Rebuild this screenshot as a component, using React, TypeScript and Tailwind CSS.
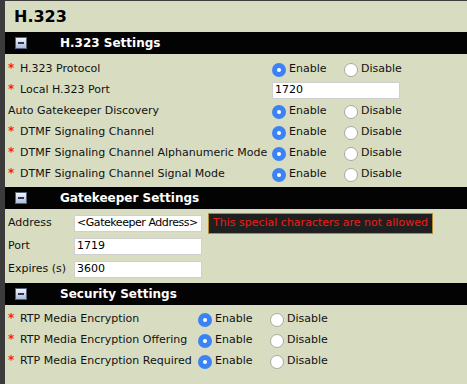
import React from "react";

const font = { fontFamily: '"DejaVu Sans", Verdana, sans-serif' };

function Radio({ checked }: { checked: boolean }) {
  return checked ? (
    <span className="w-[14px] h-[14px] rounded-full bg-[#3b82f6] flex items-center justify-center shrink-0">
      <span className="w-[4px] h-[4px] rounded-full bg-white" />
    </span>
  ) : (
    <span className="w-[14px] h-[14px] rounded-full bg-white border border-[#a8a8a8] shrink-0" />
  );
}

function EnableDisable() {
  return (
    <div className="flex items-center">
      <div className="flex items-center gap-[3px] w-[72px]">
        <Radio checked />
        <span>Enable</span>
      </div>
      <div className="flex items-center gap-[3px]">
        <Radio checked={false} />
        <span>Disable</span>
      </div>
    </div>
  );
}

function Label({ text, req }: { text: string; req?: boolean }) {
  return (
    <div className="flex items-center whitespace-nowrap">
      {req && (
        <span className="text-[#ff1a1a] font-bold w-[15px] pl-[3px] text-[12px] leading-none -mt-[3px]">*</span>
      )}
      <span className={req ? "" : "pl-[3px]"}>{text}</span>
    </div>
  );
}

function SectionHeader({ title }: { title: string }) {
  return (
    <div className="h-[22px] bg-[#030303] flex items-center">
      <span className="ml-[10px] w-[12px] h-[12px] border border-[#55627e] bg-gradient-to-b from-[#f4f6fb] to-[#aebbdb] flex items-center justify-center">
        <span className="w-[6px] h-[2px] bg-[#2d3550]" />
      </span>
      <span className="ml-[33px] text-white font-bold text-[12px]">{title}</span>
    </div>
  );
}

function TextBox({ value, tight }: { value: string; tight?: boolean }) {
  return (
    <div
      className={`w-[128px] h-[17px] bg-white border border-[#cfcfcf] flex items-center pl-[2px] text-[11px] text-black whitespace-nowrap overflow-hidden ${tight ? "tracking-[-0.45px]" : ""}`}
    >
      {value}
    </div>
  );
}

export default function App() {
  const h323Rows = [
    { label: "H.323 Protocol", req: true, kind: "radio" },
    { label: "Local H.323 Port", req: true, kind: "input" },
    { label: "Auto Gatekeeper Discovery", req: false, kind: "radio" },
    { label: "DTMF Signaling Channel", req: true, kind: "radio" },
    { label: "DTMF Signaling Channel Alphanumeric Mode", req: true, kind: "radio" },
    { label: "DTMF Signaling Channel Signal Mode", req: true, kind: "radio" },
  ];

  const secRows = [
    "RTP Media Encryption",
    "RTP Media Encryption Offering",
    "RTP Media Encryption Required",
  ];

  return (
    <div className="w-[467px] h-[384px] bg-[#3b3b3b] pt-[1px] pl-[5px] overflow-hidden" style={font}>
      <div className="h-[383px] bg-[#d8ddc2] text-[11px] text-[#111]">
        {/* Title */}
        <div className="h-[31px] flex items-center pl-[9px] pt-[1px]">
          <h1 className="text-[16px] font-bold text-black">H.323</h1>
        </div>

        <SectionHeader title="H.323 Settings" />
        <div className="pt-[5px] pb-[2px]">
          {h323Rows.map((r, i) => (
            <div key={i} className="h-[21px] grid grid-cols-[267px_1fr] items-center">
              <Label text={r.label} req={r.req} />
              {r.kind === "radio" ? <EnableDisable /> : <TextBox value="1720" />}
            </div>
          ))}
        </div>

        <SectionHeader title="Gatekeeper Settings" />
        <div className="pt-[3px] pb-[2px]">
          <div className="h-[23px] flex items-center">
            <div className="w-[69px] pl-[3px]">Address</div>
            <TextBox value="<Gatekeeper Address>" tight />
            <div className="ml-[6px] h-[21px] px-[4px] bg-[#1f1f1f] border border-[#b98a2c] text-[#e8201a] text-[11px] flex items-center whitespace-nowrap">
              This special characters are not allowed
            </div>
          </div>
          <div className="h-[23px] flex items-center">
            <div className="w-[69px] pl-[3px]">Port</div>
            <TextBox value="1719" />
          </div>
          <div className="h-[23px] flex items-center">
            <div className="w-[69px] pl-[3px]">Expires (s)</div>
            <TextBox value="3600" />
          </div>
        </div>

        <SectionHeader title="Security Settings" />
        <div className="pt-[4px]">
          {secRows.map((l, i) => (
            <div key={i} className="h-[21px] grid grid-cols-[193px_1fr] items-center">
              <Label text={l} req />
              <EnableDisable />
            </div>
          ))}
        </div>
      </div>
    </div>
  );
}
